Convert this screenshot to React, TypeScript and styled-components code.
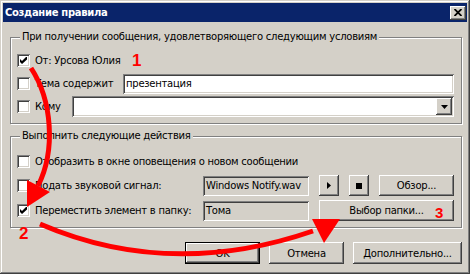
import React from 'react';
import styled, { createGlobalStyle } from 'styled-components';

const face = '#d4d0c8';
const raised = `inset -1px -1px #404040, inset 1px 1px #ffffff, inset -2px -2px #808080, inset 2px 2px ${face}`;
const sunken = `inset 1px 1px #808080, inset -1px -1px #ffffff, inset 2px 2px #404040, inset -2px -2px ${face}`;

const GlobalStyle = createGlobalStyle`
  html, body {
    margin: 0;
    padding: 0;
    background: ${face};
  }
  body {
    font-family: 'DejaVu Sans', Tahoma, sans-serif;
    font-size: 10px;
    letter-spacing: -0.25px;
    color: #000;
  }
  * {
    box-sizing: border-box;
  }
`;

const Window = styled.div`
  position: relative;
  width: 470px;
  height: 274px;
  padding: 3px;
  background: ${face};
  box-shadow: inset -1px -1px #404040, inset 1px 1px ${face},
    inset -2px -2px #808080, inset 2px 2px #ffffff;
  display: flex;
  flex-direction: column;
  overflow: hidden;
`;

const TitleBar = styled.div`
  height: 19px;
  background: #0a246a;
  color: #fff;
  display: flex;
  align-items: center;
  justify-content: space-between;
  padding: 0 1px 0 2px;
`;

const Title = styled.span`
  font-weight: bold;
  font-size: 10px;
  letter-spacing: -0.3px;
`;

const CloseButton = styled.div`
  width: 16px;
  height: 14px;
  background: ${face};
  box-shadow: ${raised};
  display: flex;
  align-items: center;
  justify-content: center;
`;

const Body = styled.div`
  padding: 0 5px 0 7px;
  display: flex;
  flex-direction: column;
`;

const Group = styled.div<{ $top: number }>`
  margin-top: ${({ $top }) => $top}px;
  border: 1px solid #808080;
  box-shadow: 1px 1px 0 #ffffff, inset 1px 1px 0 #ffffff;
  display: flex;
  flex-direction: column;
  padding: 0 7px 6px 6px;
`;

const Caption = styled.span`
  align-self: flex-start;
  margin: -8px 0 0 3px;
  padding: 0 2px;
  line-height: 14px;
  background: ${face};
  white-space: nowrap;
`;

const Row = styled.div<{ $top: number; $h?: number }>`
  margin-top: ${({ $top }) => $top}px;
  height: ${({ $h }) => $h ?? 21}px;
  display: flex;
  align-items: center;
`;

const CheckLabel = styled.label<{ $w?: number }>`
  display: flex;
  align-items: center;
  gap: 5px;
  width: ${({ $w }) => ($w ? `${$w}px` : 'auto')};
  flex: none;
  white-space: nowrap;
`;

const Box = styled.span`
  width: 13px;
  height: 13px;
  background: #fff;
  box-shadow: ${sunken};
  display: flex;
  align-items: center;
  justify-content: center;
  flex: none;
`;

const Field = styled.div<{ $w?: number; $gray?: boolean }>`
  height: 20px;
  ${({ $w }) => ($w ? `width: ${$w}px; flex: none;` : 'flex: 1;')}
  background: ${({ $gray }) => ($gray ? face : '#fff')};
  box-shadow: ${sunken};
  padding: 0 3px;
  display: flex;
  align-items: center;
  white-space: nowrap;
  overflow: hidden;
`;

const Combo = styled.div`
  flex: 1;
  height: 21px;
  background: #fff;
  box-shadow: ${sunken};
  display: flex;
  justify-content: flex-end;
  align-items: center;
  padding: 2px;
`;

const DropButton = styled.div`
  width: 16px;
  height: 17px;
  background: ${face};
  box-shadow: ${raised};
  display: flex;
  align-items: center;
  justify-content: center;
`;

const Button = styled.div<{ $w: number; $default?: boolean; $h?: number }>`
  width: ${({ $w }) => $w}px;
  height: ${({ $h }) => $h ?? 21}px;
  flex: none;
  background: ${face};
  box-shadow: ${({ $default }) =>
    $default
      ? `inset 0 0 0 1px #000, inset -2px -2px #404040, inset 2px 2px #ffffff, inset -3px -3px #808080`
      : raised};
  display: flex;
  align-items: center;
  justify-content: center;
  white-space: nowrap;
`;

const Tools = styled.div`
  display: flex;
  gap: 10px;
  margin-left: 10px;
`;

const Footer = styled.div`
  margin-top: 14px;
  display: flex;
  justify-content: flex-end;
  gap: 9px;
`;

const Overlay = styled.svg`
  position: absolute;
  left: 0;
  top: 0;
  pointer-events: none;
`;

const Num = styled.text`
  font-family: 'Liberation Sans', Arial, sans-serif;
  font-weight: bold;
  letter-spacing: 0;
  fill: #ff0000;
`;

const Check = () => (
  <svg width="7" height="7" viewBox="0 0 7 7">
    <path d="M0 2 L2 4 L6 0 L7 0 L7 2.5 L2 7 L0 5 Z" fill="#000" />
  </svg>
);

const CheckBox: React.FC<{ checked?: boolean; label: string; width?: number }> = ({
  checked,
  label,
  width,
}) => (
  <CheckLabel $w={width}>
    <Box>{checked && <Check />}</Box>
    <span>{label}</span>
  </CheckLabel>
);

export default function App() {
  return (
    <>
      <GlobalStyle />
      <Window>
        <TitleBar>
          <Title>Создание правила</Title>
          <CloseButton>
            <svg width="8" height="7" viewBox="0 0 8 7">
              <path d="M0.5 0 L7.5 7 M7.5 0 L0.5 7" stroke="#000" strokeWidth="1.8" />
            </svg>
          </CloseButton>
        </TitleBar>
        <Body>
          <Group $top={15}>
            <Caption>При получении сообщения, удовлетворяющего следующим условиям</Caption>
            <Row $top={6}>
              <CheckBox checked label="От: Урсова Юлия" />
            </Row>
            <Row $top={2}>
              <CheckBox label="Тема содержит" width={106} />
              <Field>презентация</Field>
            </Row>
            <Row $top={2}>
              <CheckBox label="Кому" width={55} />
              <Combo>
                <DropButton>
                  <svg width="7" height="4" viewBox="0 0 7 4">
                    <path d="M0 0 H7 L3.5 4 Z" fill="#000" />
                  </svg>
                </DropButton>
              </Combo>
            </Row>
          </Group>
          <Group $top={12}>
            <Caption>Выполнить следующие действия</Caption>
            <Row $top={8} $h={20}>
              <CheckBox label="Отобразить в окне оповещения о новом сообщении" />
            </Row>
            <Row $top={4}>
              <CheckBox label="Подать звуковой сигнал:" width={186} />
              <Field $w={106} $gray>Windows Notify.wav</Field>
              <Tools>
                <Button $w={20}>
                  <svg width="4" height="7" viewBox="0 0 4 7">
                    <path d="M0 0 L4 3.5 L0 7 Z" fill="#000" />
                  </svg>
                </Button>
                <Button $w={20}>
                  <svg width="6" height="6" viewBox="0 0 6 6">
                    <rect width="6" height="6" fill="#000" />
                  </svg>
                </Button>
                <Button $w={75}>Обзор...</Button>
              </Tools>
            </Row>
            <Row $top={4}>
              <CheckBox checked label="Переместить элемент в папку:" width={186} />
              <Field $w={106} $gray>Тома</Field>
              <Tools>
                <Button $w={135}>Выбор папки...</Button>
              </Tools>
            </Row>
          </Group>
          <Footer>
            <Button $w={75} $h={22} $default>OK</Button>
            <Button $w={75} $h={22}>Отмена</Button>
            <Button $w={109} $h={22}>Дополнительно...</Button>
          </Footer>
        </Body>
        <Overlay width="470" height="274" viewBox="0 0 470 274">
          <path d="M31 68 C52 100, 56 150, 38 186" stroke="#ff0000" strokeWidth="5" fill="none" />
          <polygon points="27,180 50,192 27,207" fill="#ff0000" />
          <path d="M40 224 Q170 280 313 231" stroke="#ff0000" strokeWidth="5" fill="none" />
          <polygon points="312,219 324,243 340,219" fill="#ff0000" />
          <Num x="132" y="66" fontSize="17">1</Num>
          <Num x="19" y="239" fontSize="17">2</Num>
          <Num x="435" y="218" fontSize="15">3</Num>
        </Overlay>
      </Window>
    </>
  );
}
